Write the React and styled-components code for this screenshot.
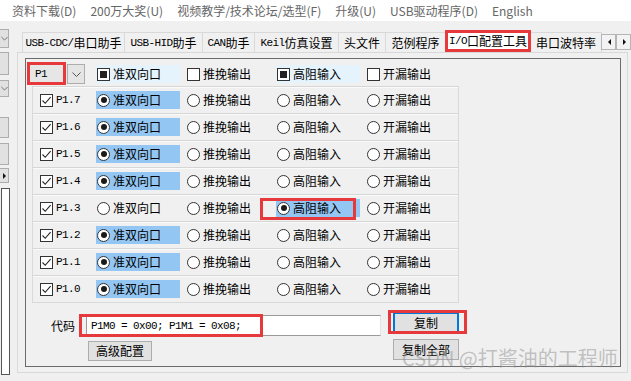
import React from "react";
import styled, { createGlobalStyle } from "styled-components";

const RED = "#e5393c";
const CJK = `"Noto Sans CJK SC", "Liberation Sans", sans-serif`;

const GlobalStyle = createGlobalStyle`
  html, body { margin: 0; padding: 0; }
  body {
    width: 631px;
    height: 381px;
    overflow: hidden;
    background: #f0f0f0;
    font-family: ${CJK};
    font-size: 12px;
    color: #000;
  }
  * { box-sizing: border-box; }
`;

const Window = styled.div`
  position: relative;
  width: 631px;
  height: 381px;
  display: flex;
  flex-direction: column;
  overflow: hidden;
`;

const MenuBar = styled.div`
  height: 21px;
  display: flex;
  align-items: center;
  gap: 14px;
  padding-left: 12px;
  background: #fff;
`;

const MenuItem = styled.span`
  font-size: 12px;
  line-height: 21px;
  color: #666;
  white-space: nowrap;
`;

const Body = styled.div`
  flex: 1;
  display: flex;
  min-height: 0;
`;

const SidePanel = styled.div`
  width: 14px;
  display: flex;
  flex-direction: column;
  padding-bottom: 6px;
`;

const SideBox = styled.div`
  width: ${p => (p.$white ? 9 : 10)}px;
  height: ${p => (p.$h ? `${p.$h}px` : "auto")};
  flex: ${p => (p.$white ? 1 : "none")};
  margin-top: ${p => p.$mt}px;
  margin-left: ${p => (p.$white ? 1 : -1)}px;
  border: 1px solid ${p => (p.$white ? "#555" : "#adadad")};
  background: ${p => (p.$white ? "#fff" : "#e1e1e1")};
  display: flex;
  align-items: center;
  padding-left: 1px;
`;

const Arrow = styled.span`
  width: 0;
  height: 0;
  margin-left: 2px;
  border-top: 3px solid transparent;
  border-bottom: 3px solid transparent;
  ${p => (p.$dir === "left" ? "border-right: 3px solid #111;" : "border-left: 3px solid #111;")}
`;

const TabControl = styled.div`
  flex: 1;
  margin-left: 3px;
  padding-top: 9px;
  display: flex;
  flex-direction: column;
`;

const TabStrip = styled.div`
  position: relative;
  height: 22px;
  display: flex;
  align-items: flex-end;
  padding-left: 5px;
  overflow: hidden;
`;

const Tab = styled.div`
  flex: none;
  width: ${p => p.$w}px;
  height: ${p => (p.$active ? 22 : 20)}px;
  margin-right: -1px;
  border: ${p => (p.$active ? `3px solid ${RED}` : "1px solid #d9d9d9")};
  border-bottom: ${p => (p.$active ? `3px solid ${RED}` : "none")};
  background: ${p => (p.$active ? "#fff" : "#f0f0f0")};
  position: relative;
  z-index: ${p => (p.$active ? 2 : 1)};
  display: flex;
  align-items: center;
  justify-content: center;
  white-space: nowrap;
  font-size: 12px;
  line-height: 16px;
`;

const Lat = styled.span`
  font-family: "Liberation Mono", monospace;
  font-size: 11px;
  letter-spacing: -0.6px;
`;

const Scroller = styled.div`
  position: absolute;
  right: 0;
  top: 4px;
  display: flex;
  z-index: 3;
`;

const ScrollBtn = styled.div`
  width: 15px;
  height: 16px;
  border: 1px solid #b5b5b5;
  background: #f3f3f3;
  display: flex;
  align-items: center;
  justify-content: center;
`;

const TabPage = styled.div`
  flex: 1;
  margin: 0 3px 8px 0;
  border: 1px solid #d9d9d9;
  background: #f0f0f0;
  padding: 5px 6px 0 7px;
`;

const GroupBox = styled.div`
  border: 1px solid #6b6b6b;
  padding-bottom: 5px;
`;

const HeaderRow = styled.div`
  display: grid;
  grid-template-columns: 67px repeat(4, 90px);
  align-items: center;
  height: 20px;
  margin: 5px 0 0 3px;
`;

const Combo = styled.div`
  position: relative;
  width: 56px;
  height: 20px;
  display: flex;
`;

const ComboText = styled.div`
  width: 38px;
  height: 20px;
  background: #e6e6e6;
  border-left: 1px solid #666;
  padding-left: 5px;
  display: flex;
  align-items: center;
`;

const ComboBtn = styled.div`
  flex: 1;
  height: 20px;
  border: 1px solid #adadad;
  background: #e5e5e5;
  display: flex;
  align-items: center;
  justify-content: center;
`;

const Mark = styled.div`
  position: absolute;
  left: ${p => p.$l}px;
  top: ${p => p.$t}px;
  width: ${p => p.$w}px;
  height: ${p => p.$h}px;
  border: 3px solid ${RED};
  pointer-events: none;
  z-index: 4;
`;

const Opt = styled.div`
  position: relative;
  width: 84px;
  height: 18px;
  padding-left: 1px;
  display: flex;
  align-items: center;
  gap: 3px;
  background: ${p => p.$bg || "transparent"};
  font-size: 12px;
  line-height: 18px;
  white-space: nowrap;
`;

const Box = styled.span`
  flex: none;
  width: 13px;
  height: 13px;
  border: 1px solid #333;
  background: #fff;
  display: flex;
  align-items: center;
  justify-content: center;
`;

const FillSquare = styled.span`
  width: 7px;
  height: 7px;
  background: #222;
`;

const Radio = styled.span`
  flex: none;
  width: 13px;
  height: 13px;
  border: 1px solid #333;
  border-radius: 50%;
  background: #fff;
  display: flex;
  align-items: center;
  justify-content: center;

  &::after {
    content: "";
    display: ${p => (p.$on ? "block" : "none")};
    width: 6px;
    height: 6px;
    border-radius: 50%;
    background: #1a1a1a;
  }
`;

const PinTable = styled.div`
  width: 427px;
  margin: 2px 0 0 6px;
  border-left: 1px solid #d9d9d9;
  border-right: 1px solid #d9d9d9;
  border-bottom: 1px solid #d9d9d9;
`;

const PinRow = styled.div`
  display: grid;
  grid-template-columns: 63px repeat(4, 90px);
  align-items: center;
  height: 27px;
  border-top: 1px solid #d6d6d6;
  box-shadow: inset 0 1px 0 #fafafa;
`;

const PinLabel = styled.div`
  display: flex;
  align-items: center;
  gap: 3px;
  padding-left: 7px;
`;

const BottomGrid = styled.div`
  display: grid;
  grid-template-columns: 60px 295px 12px 66px;
  grid-template-rows: 23px 22px;
  row-gap: 3px;
  margin-top: 10px;
`;

const CodeLabel = styled.div`
  grid-column: 1;
  grid-row: 1;
  margin-top: 2px;
  padding-right: 11px;
  text-align: right;
  line-height: 21px;
  font-size: 12px;
`;

const CodeBox = styled.div`
  position: relative;
  grid-column: 2;
  grid-row: 1;
  margin-top: 2px;
  height: 21px;
  background: #fff;
  border: 1px solid #9a9a9a;
  border-right-color: #e3e3e3;
  padding-left: 4px;
  display: flex;
  align-items: center;
`;

const Button = styled.div`
  position: relative;
  grid-column: ${p => p.$col};
  grid-row: ${p => p.$row};
  width: ${p => p.$w || 66}px;
  height: ${p => p.$h || 20}px;
  margin-top: ${p => p.$mt || 0}px;
  margin-left: ${p => p.$ml || 0}px;
  background: #e1e1e1;
  border: 1px solid ${p => (p.$focus ? "#0078d7" : "#adadad")};
  box-shadow: ${p => (p.$focus ? "inset 1px 0 #0078d7, inset -1px 0 #0078d7" : "none")};
  display: flex;
  align-items: center;
  justify-content: center;
  font-size: 12px;
  line-height: 16px;
`;

const Watermark = styled.div`
  position: absolute;
  left: 402px;
  top: 345px;
  font-family: ${CJK};
  font-size: 20px;
  line-height: 26px;
  color: rgba(150, 150, 150, 0.55);
  white-space: nowrap;
  pointer-events: none;
`;

const Chevron = () => (
  <svg width="9" height="5" viewBox="0 0 9 5">
    <polyline points="0.5,0.5 4.5,4.5 8.5,0.5" fill="none" stroke="#555" strokeWidth="1" />
  </svg>
);

const CheckBox = ({ state }) => (
  <Box>
    {state === "fill" && <FillSquare />}
    {state === "check" && (
      <svg width="11" height="11" viewBox="0 0 11 11">
        <path d="M1.5 5.5L4.2 8.3L9.6 2.2" fill="none" stroke="#222" strokeWidth="1.1" />
      </svg>
    )}
  </Box>
);

const menus = ["资料下载(D)", "200万大奖(U)", "视频教学/技术论坛/选型(F)", "升级(U)", "USB驱动程序(D)", "English"];

const tabs = [
  { lat: "USB-CDC/", cjk: "串口助手", w: 103 },
  { lat: "USB-HID", cjk: "助手", w: 79 },
  { lat: "CAN", cjk: "助手", w: 53 },
  { lat: "Keil", cjk: "仿真设置", w: 85 },
  { lat: "", cjk: "头文件", w: 48 },
  { lat: "", cjk: "范例程序", w: 61 },
  { lat: "I/O", cjk: "口配置工具", w: 86, active: true },
  { lat: "", cjk: "串口波特率", w: 72 },
];

const modes = ["准双向口", "推挽输出", "高阻输入", "开漏输出"];

const pins = [
  { name: "P1.7", mode: 0 },
  { name: "P1.6", mode: 0 },
  { name: "P1.5", mode: 0 },
  { name: "P1.4", mode: 0 },
  { name: "P1.3", mode: 2, marked: true },
  { name: "P1.2", mode: 0 },
  { name: "P1.1", mode: 0 },
  { name: "P1.0", mode: 0 },
];

const headState = ["fill", "none", "fill", "none"];

export default function App() {
  return (
    <Window>
      <GlobalStyle />
      <MenuBar>
        {menus.map(m => (
          <MenuItem key={m}>{m}</MenuItem>
        ))}
      </MenuBar>
      <Body>
        <SidePanel>
          <SideBox $mt={8} $h={19}><Chevron /></SideBox>
          <SideBox $mt={4} $h={23} />
          <SideBox $mt={5} $h={17}><Chevron /></SideBox>
          <SideBox $mt={20} $h={21} />
          <SideBox $mt={5} $h={22} />
          <SideBox $mt={3} $h={15}><Arrow $dir="right" /></SideBox>
          <SideBox $mt={5} $white />
        </SidePanel>
        <TabControl>
          <TabStrip>
            {tabs.map(t => (
              <Tab key={t.cjk + t.lat} $w={t.w} $active={t.active}>
                {t.lat && <Lat>{t.lat}</Lat>}
                {t.cjk}
              </Tab>
            ))}
            <Scroller>
              <ScrollBtn><Arrow $dir="left" /></ScrollBtn>
              <ScrollBtn><Arrow $dir="right" /></ScrollBtn>
            </Scroller>
          </TabStrip>
          <TabPage>
            <GroupBox>
              <HeaderRow>
                <Combo>
                  <ComboText><Lat>P1</Lat></ComboText>
                  <ComboBtn><Chevron /></ComboBtn>
                  <Mark $l={-2} $t={-2} $w={39} $h={23} />
                </Combo>
                {modes.map((m, i) => (
                  <Opt key={m} $bg={headState[i] === "fill" ? "#e5f3fd" : undefined}>
                    <CheckBox state={headState[i]} />
                    {m}
                  </Opt>
                ))}
              </HeaderRow>
              <PinTable>
                {pins.map(p => (
                  <PinRow key={p.name}>
                    <PinLabel>
                      <CheckBox state="check" />
                      <Lat>{p.name}</Lat>
                    </PinLabel>
                    {modes.map((m, i) => (
                      <Opt key={m} $bg={p.mode === i ? "#94c6f4" : undefined}>
                        <Radio $on={p.mode === i} />
                        {m}
                        {p.marked && p.mode === i && <Mark $l={-16} $t={-1} $w={96} $h={22} />}
                      </Opt>
                    ))}
                  </PinRow>
                ))}
              </PinTable>
              <BottomGrid>
                <CodeLabel>代码</CodeLabel>
                <CodeBox>
                  <Lat>P1M0 = 0x00; P1M1 = 0x08;</Lat>
                  <Mark $l={-8} $t={-2} $w={184} $h={23} />
                </CodeBox>
                <Button $col={4} $row={1} $focus>
                  复制
                  <Mark $l={-6} $t={-4} $w={79} $h={24} />
                </Button>
                <Button $col={2} $row={2} $w={64} $mt={2} $ml={2}>高级配置</Button>
                <Button $col={4} $row={2} $h={21}>复制全部</Button>
              </BottomGrid>
            </GroupBox>
          </TabPage>
        </TabControl>
      </Body>
      <Watermark>CSDN @打酱油的工程师</Watermark>
    </Window>
  );
}
